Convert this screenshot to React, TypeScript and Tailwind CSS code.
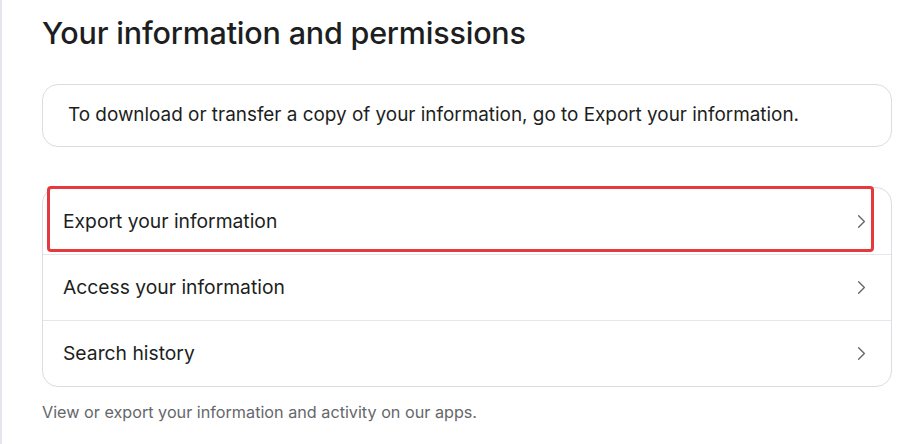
import { ChevronRight } from 'lucide-react';

const rows = ['Export your information', 'Access your information', 'Search history'];

export default function App() {
  return (
    <div className="h-[444px] w-[924px] overflow-hidden bg-white border-l-2 border-[#e4e6eb] font-['Inter',sans-serif] text-[#1c1e21]">
      <div className="pl-[40px] pr-[32px] pt-[14px]">
        <h1 className="text-[30.5px] leading-[38px] font-medium tracking-[-0.2px]">Your information and permissions</h1>

        <div className="mt-[32px] h-[63px] flex items-center rounded-[16px] border border-[#dadde1] px-[25px]">
          <p className="text-[18.9px]">To download or transfer a copy of your information, go to Export your information.</p>
        </div>

        <div className="relative mt-[40px] rounded-[16px] border border-[#dadde1]">
          {rows.map((label, i) => (
            <div
              key={label}
              className={`flex h-[66px] items-center justify-between pl-[20px] pr-[18px] ${i > 0 ? 'border-t border-[#e4e6eb]' : ''}`}
            >
              <span className="text-[19.3px]">{label}</span>
              <ChevronRight className="h-[23px] w-[23px] text-[#65676b]" strokeWidth={1.4} />
            </div>
          ))}
          <div className="pointer-events-none absolute left-[4px] top-[-2px] h-[66px] w-[827px] rounded-[4px] border-[3px] border-[#e5393d]" />
        </div>

        <p className="mt-[13px] text-[16.2px] text-[#65676b]">View or export your information and activity on our apps.</p>
      </div>
    </div>
  );
}
